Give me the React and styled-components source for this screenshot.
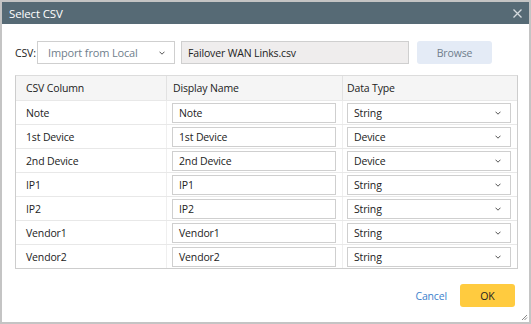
import React from 'react';
import styled, { createGlobalStyle } from 'styled-components';

const GlobalStyle = createGlobalStyle`
  html, body {
    margin: 0;
    padding: 0;
    background: #fff;
  }
  body {
    font-family: "Open Sans", "Liberation Sans", Arial, sans-serif;
    font-size: 10.5px;
    letter-spacing: -0.15px;
    color: #222;
  }
`;

const Dialog = styled.div`
  width: 531px;
  height: 324px;
  box-sizing: border-box;
  border: 2px solid #c4c4c4;
  background: #fff;
  display: flex;
  flex-direction: column;
  position: relative;
`;

const TitleBar = styled.div`
  height: 22px;
  background: #566a75;
  color: #fff;
  font-size: 11.5px;
  display: flex;
  align-items: center;
  justify-content: space-between;
  padding: 0 7px 0 7px;
`;

const Close = styled.span`
  display: flex;
  align-items: center;
  cursor: pointer;
`;

const Body = styled.div`
  padding: 17px 13px 0 13px;
  display: flex;
  flex-direction: column;
  flex: 1;
`;

const SourceRow = styled.div`
  display: flex;
  align-items: center;
  height: 23px;
`;

const Label = styled.span`
  width: 22px;
  color: #222;
`;

const SelectBox = styled.div`
  box-sizing: border-box;
  width: ${p => p.$width || '100%'};
  height: ${p => p.$height || '20px'};
  border: 1px solid #cfcfcf;
  background: #fff;
  display: flex;
  align-items: center;
  justify-content: space-between;
  padding: 0 9px 0 ${p => p.$pad || '6px'};
  color: ${p => p.$muted ? '#6f7e8c' : '#222'};
  font-size: ${p => p.$muted ? '11px' : '10.5px'};
`;

const FileField = styled.div`
  box-sizing: border-box;
  margin-left: 6px;
  width: 228px;
  height: 23px;
  border: 1px solid #cfcfcf;
  background: #efeded;
  display: flex;
  align-items: center;
  padding-left: 6px;
`;

const BrowseButton = styled.button`
  margin-left: 8px;
  width: 75px;
  height: 23px;
  border: none;
  border-radius: 3px;
  background: #e4ebf6;
  color: #6f7d8c;
  font-family: inherit;
  font-size: 10.5px;
  letter-spacing: -0.15px;
`;

const Table = styled.div`
  margin-top: 11px;
  width: 501px;
  border: 1px solid #cdcdcd;
  border-top-color: #dcdcdc;
`;

const Row = styled.div`
  display: grid;
  grid-template-columns: 150px 176px 1fr;
  height: ${p => p.$head ? '24px' : '23px'};
  background: ${p => p.$head ? '#f5f5f5' : '#fff'};
  border-bottom: 1px solid #e8e8e8;
  &:last-child {
    border-bottom: none;
  }
`;

const Cell = styled.div`
  display: flex;
  align-items: center;
  padding: 0 6px 0 ${p => p.$pad || '10px'};
  border-left: 1px solid ${p => p.$head ? '#e2e2e2' : '#efefef'};
  &:first-child {
    border-left: none;
  }
`;

const TextInput = styled.div`
  box-sizing: border-box;
  width: 100%;
  height: 20px;
  border: 1px solid #cfcfcf;
  display: flex;
  align-items: center;
  padding-left: 6px;
`;

const Footer = styled.div`
  margin-top: auto;
  margin-bottom: 15px;
  display: flex;
  align-items: center;
  justify-content: flex-end;
  gap: 13px;
  padding-right: 1px;
`;

const LinkButton = styled.span`
  color: #3c7fcc;
  cursor: pointer;
`;

const PrimaryButton = styled.button`
  width: 55px;
  height: 23px;
  border: none;
  border-radius: 3px;
  background: #ffcb3f;
  color: #222;
  font-family: inherit;
  font-size: 10.5px;
`;

const Grip = styled.svg`
  position: absolute;
  right: 1px;
  bottom: 1px;
`;

const Chevron = () => (
  <svg width="6" height="4" viewBox="0 0 6 4">
    <path d="M0.5 0.7 L3 3.2 L5.5 0.7" fill="none" stroke="#555" strokeWidth="1" />
  </svg>
);

const rows = [
  ['Note', 'String'],
  ['1st Device', 'Device'],
  ['2nd Device', 'Device'],
  ['IP1', 'String'],
  ['IP2', 'String'],
  ['Vendor1', 'String'],
  ['Vendor2', 'String'],
];

const App = () => {
  return (
    <>
      <GlobalStyle />
      <Dialog>
        <TitleBar>
          <span>Select CSV</span>
          <Close>
            <svg width="9" height="9" viewBox="0 0 9 9">
              <path d="M0.5 0.5 L8.5 8.5 M8.5 0.5 L0.5 8.5" stroke="#d5dbdf" strokeWidth="1.3" />
            </svg>
          </Close>
        </TitleBar>
        <Body>
          <SourceRow>
            <Label>CSV:</Label>
            <SelectBox $width="138px" $height="23px" $pad="10px" $muted>
              <span>Import from Local</span>
              <Chevron />
            </SelectBox>
            <FileField>Failover WAN Links.csv</FileField>
            <BrowseButton>Browse</BrowseButton>
          </SourceRow>
          <Table>
            <Row $head>
              <Cell $head>CSV Column</Cell>
              <Cell $head $pad="6px">Display Name</Cell>
              <Cell $head $pad="4px">Data Type</Cell>
            </Row>
            {rows.map(([name, type]) => (
              <Row key={name}>
                <Cell>{name}</Cell>
                <Cell $pad="5px"><TextInput>{name}</TextInput></Cell>
                <Cell $pad="4px">
                  <SelectBox>
                    <span>{type}</span>
                    <Chevron />
                  </SelectBox>
                </Cell>
              </Row>
            ))}
          </Table>
          <Footer>
            <LinkButton>Cancel</LinkButton>
            <PrimaryButton>OK</PrimaryButton>
          </Footer>
        </Body>
        <Grip width="7" height="7" viewBox="0 0 7 7">
          <path d="M6 1 L1 6 M6 3.5 L3.5 6" stroke="#888" strokeWidth="1" />
        </Grip>
      </Dialog>
    </>
  );
};

export default App;
